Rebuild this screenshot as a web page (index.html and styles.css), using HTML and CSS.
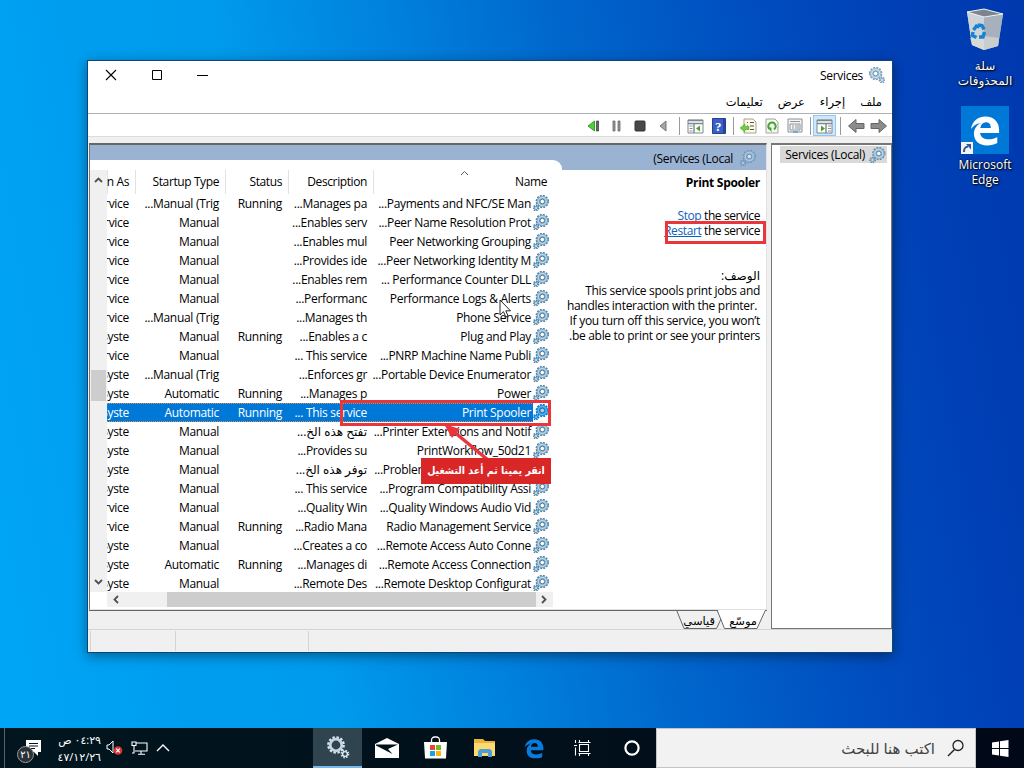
FILE: index.html
```html
<!DOCTYPE html>
<html lang="ar" dir="rtl">
<head>
  <meta charset="UTF-8" />
  <title>Services</title>
  <link rel="stylesheet" href="styles.css">
</head>
<body>
  <svg class="defs" width="0" height="0">
    <defs>
      <symbol id="gears" viewBox="0 0 16 16">
        <circle cx="9.3" cy="6.5" r="5.7" fill="none" stroke="#4f80a3" stroke-width="2" stroke-dasharray="1.8 1.18" />
        <circle cx="9.3" cy="6.5" r="4" fill="none" stroke="#7ba6c5" stroke-width="3.4" />
        <circle cx="9.3" cy="6.5" r="4" fill="none" stroke="#b9d5e8" stroke-width="1.4" />
        <circle cx="9.3" cy="6.5" r="2.3" fill="#fff" stroke="#4b7898" stroke-width="1" />
        <circle cx="3" cy="13" r="2.4" fill="none" stroke="#4f80a3" stroke-width="2" stroke-dasharray="1.2 .8" />
        <circle cx="3" cy="13" r="1.6" fill="#c5dcea" stroke="#709cb9" stroke-width="1" />
      </symbol>
      <symbol id="edge" viewBox="0 0 32 32">
        <path d="M1 14.500C2.300 6.500 8 1 16.500 1 26 1 31 7.500 31 15v3.600H10.800c.3 4.700 4.400 6.800 9.300 6.800 3.400 0 6.300-.9 9-2.500v6.500c-3 1.700-6.700 2.600-11 2.600C9.500 32 4.200 26.900 4.200 19.500c0-5 2.700-9.200 7.200-11.600C6.800 8.600 3.300 11 1 14.500zM11 13.200h11.200c0-3.700-1.900-6-5.300-6-3.100 0-5.200 2.300-5.900 6z" />
      </symbol>
    </defs>
  </svg>

  <div class="desktop">
    <div class="window">
      <div class="titlebar">
        <svg class="title-icon" width="16" height="16"><use href="#gears" opacity=".8" transform="translate(16 0) scale(-1 1)" /></svg>
        <span>Services</span>
        <div class="controls">
          <svg width="12" height="12"><path d="M0 6.500h11" stroke="#000" /></svg>
          <svg width="12" height="12"><path d="M1.500 1.500h9v9h-9z" fill="none" stroke="#000" /></svg>
          <svg width="12" height="12"><path d="M1 1l10 10M11 1L1 11" stroke="#000" stroke-width="1.1" /></svg>
        </div>
      </div>
      <div class="menu">
        <span>ملف</span><span>إجراء</span><span>عرض</span><span>تعليمات</span>
      </div>

      <div class="toolbar">
        <div class="tool"><svg width="18" height="16"><path d="M1 5.500h8v-4l7.500 6.500L9 14.500v-4H1z" fill="#8c8c8c" stroke="#666" /></svg></div>
        <div class="tool"><svg width="18" height="16"><path d="M17 5.500H9v-4L1.500 8 9 14.500v-4h8z" fill="#8c8c8c" stroke="#666" /></svg></div>
        <i class="sep s1"></i>
        <div class="tool active"><svg width="17" height="16"><path d="M1 2h15v13H1z" fill="#fff" stroke="#7c8790" /><path d="M1 2.500h15M1 5.500h15M10 6v9" stroke="#7c8790" stroke-width="1.4" /><path d="M12 8h3M12 10.500h3M12 13h3" stroke="#8a9096" /><path d="M5 7.500v6l4-3z" fill="#45a530" /></svg></div>
        <i class="sep s2"></i>
        <div class="tool"><svg width="16" height="16"><path d="M1 1h14v13H1z" fill="#f6f6f6" stroke="#8a8f94" /><path d="M3 3.500h10M3 6h10v6H3zM5 8h2M8 8h4M5 10h2M8 10h4" fill="none" stroke="#8b949b" /><path d="M6 13h5v2H6z" fill="#69afd5" /></svg></div>
        <div class="tool"><svg width="14" height="16"><path d="M1 1h9l3 3v11H1z" fill="#f7f7ed" stroke="#a4a49c" /><path d="M4.500 11A3.700 3.700 0 1 1 9 11.400" fill="none" stroke="#3fa535" stroke-width="2" /><path d="M2.500 9.500h4v4.500z" fill="#3fa535" /></svg></div>
        <div class="tool"><svg width="17" height="16"><path d="M4 1h9l3 3v11H4z" fill="#fdfbe6" stroke="#a4a08c" /><path d="M7 4.500h1M10 4.500h4M7 8h1M10 8h4M7 11.500h1M10 11.500h4" stroke="#555" /><path d="M0 10l5-4v2.500h4v3H5V14z" fill="#6bd03c" stroke="#4a9b2c" stroke-width=".5" /></svg></div>
        <i class="sep s3"></i>
        <div class="tool"><svg width="14" height="16"><path d="M.5.5h13v15H.5z" fill="#3c5fc7" stroke="#26408f" /><path d="M11 1h2v14h-2z" fill="#2545a3" /><text x="6" y="13" fill="#fff" class="help-mark">?</text></svg></div>
        <div class="tool"><svg width="17" height="16"><path d="M1 2h15v13H1z" fill="#fff" stroke="#7c8790" /><path d="M1 2.500h15M1 5.500h15M7 6v9" stroke="#7c8790" stroke-width="1.4" /><path d="M2.500 8h3M2.500 10.500h3M2.500 13h3" stroke="#8a9096" /><path d="M13 7.500v6l-4-3z" fill="#45a530" /></svg></div>
        <i class="sep s4"></i>
        <div class="tool"><svg width="8" height="12"><path d="M7 1v10L1 6z" fill="#a6a6a6" stroke="#777" /></svg></div>
        <div class="tool"><svg width="12" height="12"><rect x="1" y="1" width="10" height="10" rx="1" fill="#484848" stroke="#333" /></svg></div>
        <div class="tool"><svg width="10" height="12"><path d="M1 1h2v10H1zM6 1h2v10H6z" fill="#999" stroke="#666" stroke-width=".8" /></svg></div>
        <div class="tool"><svg width="13" height="12"><path d="M7.500 1v10L1 6z" fill="#4ed03a" stroke="#34a325" /><path d="M9.500 1h2v10h-2z" fill="#666" stroke="#444" stroke-width=".8" /></svg></div>
      </div>

      <div class="body">
        <div class="tree">
          <div class="tree-item">
            <svg width="17" height="16"><use href="#gears" opacity=".85" /></svg>
            <span dir="ltr">Services (Local)</span>
          </div>
        </div>

        <div class="main">
          <div class="view">
            <div class="view-head">
              <svg width="16" height="16"><use href="#gears" opacity=".6" /></svg>
              <span>Services (Local<bdi dir="rtl">)</bdi></span>
            </div>
            <div class="columns">
              <div class="info">
                <h2>Print Spooler</h2>
                <p class="actions" dir="ltr"><a>Stop</a> the service<br><a>Restart</a> the service</p>
                <p class="about">الوصف:<br>This service spools print jobs and<br>handles interaction with the printer.&nbsp;&lrm;<br>If you turn off this service, you won’t<br>be able to print or see your printers.</p>
              </div>
              <div class="list">
                <div class="list-main">
                  <div class="rows">
                    <div class="row head">
                      <span class="name">Name<svg width="9" height="6"><path d="M1 5l3.500-3.500L8 5" fill="none" stroke="#555" /></svg></span>
                      <span>Description</span><span>Status</span><span>Startup Type</span><span>Log On As</span>
                    </div>
                    <div id="rows"></div>
                  </div>
                  <div class="vscroll">
                    <svg width="9" height="6"><path d="M1 5l3.500-3.500L8 5" fill="none" stroke="#505050" stroke-width="1.8" /></svg>
                    <i></i>
                    <svg width="9" height="6"><path d="M1 1l3.500 3.500L8 1" fill="none" stroke="#505050" stroke-width="1.8" /></svg>
                  </div>
                </div>
                <div class="hscroll">
                  <svg width="6" height="9"><path d="M1 1l3.500 3.500L1 8" fill="none" stroke="#505050" stroke-width="1.8" /></svg>
                  <i></i>
                  <svg width="6" height="9"><path d="M5 1L1.500 4.500 5 8" fill="none" stroke="#505050" stroke-width="1.8" /></svg>
                </div>
              </div>
            </div>
          </div>
          <div class="tabs">
            <svg width="92" height="19">
              <path d="M43 0h48L82.500 18.500H49z" fill="#fff" />
              <path d="M0 .5h42M1.500 0L9 18.500h32.500L46 9M42 0l7.500 18.500H82L90.500 0" fill="none" stroke="#666" />
            </svg>
            <span class="tab-on">موسّع</span><span class="tab-off">قياسي</span>
          </div>
        </div>
      </div>
      <div class="status"><i></i><i></i><i></i></div>

      <div class="mark mark-restart"></div>
      <div class="mark mark-row"></div>
      <svg class="arrow" width="60" height="42"><path d="M48 38L13 9" stroke="#ea363b" stroke-width="3.5" /><path d="M4 2l16 5-8 9z" fill="#ea363b" /></svg>
      <div class="label">انقر يمينا ثم أعد التشغيل</div>
      <svg class="cursor" width="13" height="20"><path d="M1 1v15l3.500-3.300 2.300 5.300 2.300-1-2.300-5.200h4.700z" fill="#fff" stroke="#111" stroke-width=".9" /></svg>
    </div>

    <div class="shortcuts">
      <div class="shortcut bin">
        <svg width="40" height="44" viewBox="0 0 40 44">
          <path d="M2 4l17-3 19 5-5 32-14 4L7 37z" fill="#b5bfc8" />
          <path d="M2 4l17 4v34L7 37z" fill="#cdd3d8" />
          <path d="M19 8l19-2-5 32-14 4z" fill="#a7b1bd" />
          <path d="M2 4l17-3 19 5-19 3z" fill="#7c858d" stroke="#eef1f3" />
          <path d="M5 30l14-2 15 2-1 8-14 4-12-5z" fill="#e0dfd8" opacity=".6" />
          <path d="M8.500 22l3-4 3 1M13 17l4 .5 2 4M19.500 24l-1.500 5-4 0M11.500 29.500l-4-2 .5-3.500" fill="none" stroke="#1583d2" stroke-width="3.4" />
        </svg>
        <span>سلة<br>المحذوفات</span>
      </div>
      <div class="shortcut edge">
        <div class="edge-tile">
          <svg width="30" height="31"><use href="#edge" fill="#fff" /></svg>
          <svg class="link" width="12" height="12"><path d="M0 0h12v12H0z" fill="#f3f3f3" /><path d="M3 10c0-4 1-5 4-5.500" fill="none" stroke="#2a5a9c" stroke-width="2" /><path d="M5 2h5v5.500z" fill="#2a5a9c" /></svg>
        </div>
        <span>Microsoft<br>Edge</span>
      </div>
    </div>
  </div>

  <div class="taskbar">
    <div class="start"><svg width="17" height="17"><path d="M0 2.500l7-1V8H0zM8 1.300L16.500 0v8H8zM0 9h7v6.500l-7-1zM8 9h8.500v8L8 15.700z" fill="#fff" /></svg></div>
    <div class="search">
      <svg width="18" height="18"><circle cx="11" cy="6.5" r="5" fill="none" stroke="#222" stroke-width="1.3" /><path d="M7.500 10.500L1 17" stroke="#222" stroke-width="1.4" /></svg>
      <span>اكتب هنا للبحث</span>
    </div>
    <div class="app"><svg width="18" height="18"><circle cx="9" cy="9" r="6.6" fill="none" stroke="#fff" stroke-width="2.2" /></svg></div>
    <div class="app"><svg width="18" height="16"><path d="M1.500 0v3M1.500 7.500v8M0 5.500h3M5.500 4.500h9v7h-9zM4.500 2.500h12M4.500 13.500h12M5.500 0v3M14.500 0v3M5.500 13v3M14.500 13v3" fill="none" stroke="#fff" stroke-width="1.1" /></svg></div>
    <div class="app"><svg width="20" height="21" viewBox="0 0 32 32"><use href="#edge" fill="#0a7bdb" /></svg></div>
    <div class="app"><svg width="22" height="18"><path d="M0 0h9l2 2h10v15H0z" fill="#e9b43b" /><path d="M0 4h21v13H0z" fill="#fcd971" /><path d="M4 18v-6l2-2h10l2 2v6h-4v-4H8v4z" fill="#4b9fd5" /></svg></div>
    <div class="app"><svg width="24" height="24"><path d="M7.500 6V4a3 3 0 0 1 3-3h2a3 3 0 0 1 3 3v2" fill="none" stroke="#fff" stroke-width="1.3" /><path d="M0 6h23l-1 16.500H1z" fill="#fff" /><path d="M6 9h5v5H6z" fill="#e8472a" /><path d="M12 9h5v5h-5z" fill="#76b82a" /><path d="M6 15h5v5H6z" fill="#1aa0e8" /><path d="M12 15h5v5h-5z" fill="#f9b70b" /></svg></div>
    <div class="app"><svg width="24" height="20"><path d="M0 6l12-6 12 6v14H0z" fill="#fff" /><path d="M1 6.500h22L13 11l4.500 5L1 7.500z" fill="#01111b" /></svg></div>
    <div class="app open"><svg width="24" height="23">
      <circle cx="10" cy="9" r="7.6" fill="none" stroke="#dbe7f0" stroke-width="2.5" stroke-dasharray="2.4 1.6" />
      <circle cx="10" cy="9" r="5.8" fill="none" stroke="#c5d5e2" stroke-width="2.8" />
      <circle cx="19" cy="18" r="3.4" fill="none" stroke="#c9d8e3" stroke-width="2" stroke-dasharray="1.5 1.17" />
      <circle cx="19" cy="18" r="2.4" fill="none" stroke="#dfe8ef" stroke-width="1.4" />
    </svg></div>
    <div class="tray">
      <svg width="14" height="8"><path d="M1 7l6-6 6 6" fill="none" stroke="#fff" stroke-width="1.4" /></svg>
      <svg width="17" height="14"><path d="M5 2h11v8H4M10 10v3M7 13.300h7M1 1h4v3.500H1zM3 4.500V12H1" fill="none" stroke="#fff" stroke-width="1.1" /></svg>
      <svg width="17" height="16"><path d="M1 5h2l4-4v12L3 9H1z" fill="none" stroke="#fff" /><circle cx="12" cy="10.5" r="4.3" fill="#d93436" /><path d="M10.200 8.700l3.600 3.600M13.800 8.700l-3.600 3.600" stroke="#fff" stroke-width="1.2" /></svg>
      <div class="clock"><span>٠٤:٢٩ ص</span><span dir="ltr">٤٧/١٢/٢٦</span></div>
      <div class="notes">
        <svg width="17" height="18"><path d="M1 1h15v12h-3v4l-4-4H1z" fill="#fff" /><path d="M4 4.500h9M4 7h9M4 9.500h6" stroke="#01141e" /></svg>
        <b>٢١</b>
      </div>
      <i class="peek"></i>
    </div>
  </div>

  <script>
    // name, description, status, startup type, log on as
    const services = [
      ["Payments and NFC/SE Man...", "Manages pa...", "Running", "Manual (Trig...", "Local Service"],
      ["Peer Name Resolution Prot...", "Enables serv...", "", "Manual", "Local Service"],
      ["Peer Networking Grouping", "Enables mul...", "", "Manual", "Local Service"],
      ["Peer Networking Identity M...", "Provides ide...", "", "Manual", "Local Service"],
      ["Performance Counter DLL ...", "Enables rem...", "", "Manual", "Local Service"],
      ["Performance Logs & Alerts", "Performanc...", "", "Manual", "Local Service"],
      ["Phone Service", "Manages th...", "", "Manual (Trig...", "Local Service"],
      ["Plug and Play", "Enables a c...", "Running", "Manual", "Local Syste"],
      ["PNRP Machine Name Publi...", "This service ...", "", "Manual", "Local Service"],
      ["Portable Device Enumerator...", "Enforces gr...", "", "Manual (Trig...", "Local Syste"],
      ["Power", "Manages p...", "Running", "Automatic", "Local Syste"],
      ["Print Spooler", "This service ...", "Running", "Automatic", "Local Syste"],
      ["Printer Extensions and Notif...", "تفتح هذه الخ...", "", "Manual", "Local Syste"],
      ["PrintWorkflow_50d21", "Provides su...", "", "Manual", "Local Syste"],
      ["Problem Reports Control Pa...", "توفر هذه الخ...", "", "Manual", "Local Syste"],
      ["Program Compatibility Assi...", "This service ...", "", "Manual", "Local Syste"],
      ["Quality Windows Audio Vid...", "Quality Win...", "", "Manual", "Local Service"],
      ["Radio Management Service", "Radio Mana...", "Running", "Manual", "Local Service"],
      ["Remote Access Auto Conne...", "Creates a co...", "", "Manual", "Local Syste"],
      ["Remote Access Connection...", "Manages di...", "Running", "Automatic", "Local Syste"],
      ["Remote Desktop Configurat...", "Remote Des...", "", "Manual", "Local Syste"]
    ];

    document.getElementById("rows").innerHTML = services
      .map(([name, ...rest]) => `
        <div class="row${name === "Print Spooler" ? " selected" : ""}">
          <i class="icon"><svg width="16" height="16"><use href="#gears" /></svg></i>
          <span>${name.replace("&", "&amp;")}</span>
          ${rest.map(text => `<span>${text}</span>`).join("")}
        </div>`)
      .join("");
  </script>
</body>
</html>
```

FILE: styles.css
```css
* {
  box-sizing: border-box;
}

body {
  margin: 0;
  width: 1024px;
  height: 768px;
  overflow: hidden;
  font-family: "Open Sans", "DejaVu Sans", sans-serif;
  font-size: 12px;
  letter-spacing: -0.3px;
  color: #000;
}

svg {
  display: block;
  flex: none;
}

.defs {
  position: absolute;
}

.desktop {
  position: relative;
  height: 728px;
  padding: 60px 131px 0 0;
  background: linear-gradient(80deg, #00a6f7 0%, #009def 17%, #009bec 29%, #007ddb 47%, #0067cd 59%, #004fc0 75%, #0040b6 88%, #0038ae 100%);
}

.window {
  position: relative;
  width: 806px;
  height: 593px;
  display: flex;
  flex-direction: column;
  background: #f0f0f0;
  border: 1px solid #0d4576;
  box-shadow: 0 3px 12px rgba(0, 0, 0, 0.4);
}

.titlebar {
  height: 31px;
  display: flex;
  align-items: center;
  padding: 0 7px 2px 17px;
  background: #fff;
}

.title-icon {
  margin-left: 6px;
}

.controls {
  display: flex;
  gap: 34px;
  margin-right: auto;
}

.menu {
  height: 23px;
  display: flex;
  align-items: center;
  gap: 15px;
  padding: 0 10px 2px 0;
  background: #fff;
  border-bottom: 1px solid #aeb4b6;
  font-size: 11.5px;
  letter-spacing: 0;
}

.toolbar {
  height: 23px;
  display: flex;
  align-items: center;
  padding: 1px 2px 0 0;
  background: #fff;
  border-bottom: 1px solid #dcdcdc;
}

.tool {
  width: 23px;
  height: 21px;
  display: flex;
  align-items: center;
  justify-content: center;
}

.tool.active {
  background: #cfe7fa;
  border: 1px solid #90c8f6;
}

.sep {
  width: 1px;
  height: 18px;
  background: #999;
}

.s1 { margin: 0 3px 0 4px; }
.s2 { margin: 0 2px 0 4px; }
.s3 { margin: 0 3px; }
.s4 { margin: 0 4px 0 5px; }

.help-mark {
  font: bold 13px "Liberation Serif", serif;
  text-anchor: middle;
}

.body {
  height: 486px;
  margin-top: 6px;
  display: flex;
  gap: 2px;
}

.tree {
  width: 122px;
  padding: 1px 4px;
  background: #fff;
  border: 1px solid #777;
  border-top-width: 2px;
}

.tree-item {
  width: 107px;
  height: 17px;
  display: flex;
  align-items: center;
  gap: 4px;
  padding-right: 1px;
  background: #d9d9d9;
}

.main {
  flex: 1;
  display: flex;
  flex-direction: column;
  padding-left: 1px;
}

.view {
  height: 467px;
  display: flex;
  flex-direction: column;
  margin-right: 2px;
  background: #fff;
  border: 1px solid #e0e0e0;
  border-top: 2px solid #666;
  border-left-color: #777;
}

.view-head {
  height: 25px;
  display: flex;
  align-items: center;
  gap: 7px;
  padding: 1px 10px 0 0;
  background: #9ab3d3;
}

.columns {
  flex: 1;
  display: flex;
}

.info {
  width: 204px;
  flex: none;
  padding: 4px 6px 0 0;
  line-height: 15px;
}

.info h2 {
  margin: 0;
  font-size: 12px;
  line-height: 18px;
}

.info p {
  margin: 0;
  white-space: nowrap;
}

.info .actions {
  margin-top: 16px;
  text-align: right;
  letter-spacing: -0.4px;
}

.info .about {
  margin-top: 30px;
}

.info a {
  color: #0b62bd;
  text-decoration: underline;
}

/* the list reaches up over the blue strip with a rounded corner */
.list {
  flex: 1;
  min-width: 0;
  position: relative;
  display: flex;
  flex-direction: column;
  padding-right: 9px;
  margin-top: -10px;
  padding-top: 10px;
  background: #fff;
  border-top-right-radius: 9px;
}

.list-main {
  height: 422px;
  display: flex;
}

.rows {
  width: 446px;
  overflow: hidden;
}

.row {
  height: 19px;
  display: grid;
  grid-template-columns: 20px 160px 85px 63px 90px 28px;
  line-height: 20px;
  white-space: nowrap;
}

.row > span {
  padding-right: 6px;
}

.row .icon + span {
  padding-right: 2px;
}

.row .icon {
  padding: 1px 4px 0 0;
  background: #fff;
}

.selected {
  background:
    repeating-linear-gradient(90deg, #d98f4d 0 1px, #0078d7 1px 2px) top / 100% 1px no-repeat,
    repeating-linear-gradient(90deg, #d98f4d 0 1px, #0078d7 1px 2px) bottom / 100% 1px no-repeat,
    #0078d7;
  color: #fff;
}

.selected svg {
  filter: saturate(4) brightness(0.8) hue-rotate(8deg);
}

.head {
  height: 24px;
  grid-template-columns: 180px 85px 63px 90px 28px;
  line-height: 24px;
  letter-spacing: -0.4px;
}

.head span {
  border-left: 1px solid #e2e2e2;
}

.head .name {
  display: flex;
  justify-content: space-between;
  padding: 0 6px 0 86px;
}

.vscroll {
  width: 17px;
  display: flex;
  flex-direction: column;
  align-items: center;
  padding: 7px 0;
  background: #f0f0f0;
}

.vscroll i {
  width: 15px;
  height: 31px;
  margin: 187px 0 auto;
  background: #cdcdcd;
}

.hscroll {
  height: 15px;
  display: flex;
  align-items: center;
  width: 446px;
  padding: 0 6px;
  background: #f0f0f0;
}

.hscroll i {
  width: 369px;
  height: 15px;
  margin: 0 5px 0 auto;
  background: #cdcdcd;
}

.tabs {
  position: relative;
  height: 19px;
  margin-right: 2px;
  border-top: 1px solid #666;
}

.tabs svg {
  margin-top: -1px;
}

.tabs span {
  position: absolute;
  top: 1px;
  line-height: 17px;
  font-size: 11.5px;
}

.tab-on { right: 10px; }
.tab-off { right: 52px; }

.status {
  height: 23px;
  display: flex;
  padding: 1px 0 1px 2px;
  border-top: 1px solid #d4d4d4;
  direction: ltr;
}

.status i {
  width: 85px;
  border-left: 1px solid #d4d4d4;
}

.status i:nth-child(2) {
  width: 133px;
}

.mark {
  position: absolute;
  border: 3px solid #ea363b;
}

.mark-restart {
  left: 577px;
  top: 160px;
  width: 101px;
  height: 23px;
}

.mark-row {
  left: 252px;
  top: 339px;
  width: 211px;
  height: 26px;
}

.arrow {
  position: absolute;
  left: 352px;
  top: 361px;
}

.label {
  position: absolute;
  left: 333px;
  top: 397px;
  width: 130px;
  height: 26px;
  background: #d92626;
  color: #fff;
  font: bold 10.5px/25px "DejaVu Sans Condensed", "DejaVu Sans", sans-serif;
  font-stretch: condensed;
  letter-spacing: 0;
  text-align: center;
  white-space: nowrap;
}

.cursor {
  position: absolute;
  left: 411px;
  top: 238px;
}

.shortcuts {
  position: absolute;
  right: 0;
  top: 8px;
  width: 78px;
}

.shortcut {
  display: flex;
  flex-direction: column;
  align-items: center;
  text-align: center;
  line-height: 15px;
  letter-spacing: 0;
  color: #fff;
  text-shadow: 1px 1px 2px #000, 0 0 2px #000;
}

.bin {
  height: 98px;
  gap: 6px;
}

.edge {
  gap: 3px;
}

.edge-tile {
  position: relative;
  width: 48px;
  height: 48px;
  display: flex;
  align-items: center;
  justify-content: center;
  background: #0078d7;
}

.edge-tile .link {
  position: absolute;
  left: 0;
  bottom: 0;
}

.taskbar {
  height: 40px;
  display: flex;
  background: linear-gradient(90deg, #01161f, #010f1a 60%, #010817);
  color: #fff;
}

.start,
.app {
  width: 49px;
  display: flex;
  align-items: center;
  justify-content: center;
}

.start {
  width: 48px;
}

.search {
  width: 320px;
  display: flex;
  align-items: center;
  gap: 12px;
  padding-right: 10px;
  background: #f2f2f2;
  border: 1px solid #c4c4c4;
  color: #444;
  font-size: 15px;
  letter-spacing: 0;
}

.open {
  background: #30444f;
  border-bottom: 2px solid #76b9ed;
}

.tray {
  flex: 1;
  display: flex;
  align-items: center;
  gap: 8px;
  padding-right: 143px;
}

.clock {
  width: 50px;
  margin-right: -3px;
  display: flex;
  flex-direction: column;
  align-items: flex-start;
  font-size: 11px;
  line-height: 17px;
  white-space: nowrap;
}

.notes {
  position: relative;
  margin-right: 1px;
}

.notes b {
  position: absolute;
  left: -8px;
  top: 7px;
  width: 17px;
  height: 17px;
  border: 1px solid #999;
  border-radius: 50%;
  background: #2b3238;
  font: 10px/15px "DejaVu Sans", sans-serif;
  text-align: center;
}

.peek {
  align-self: stretch;
  width: 1px;
  margin: 0 auto 0 4px;
  background: #53636c;
}
```
